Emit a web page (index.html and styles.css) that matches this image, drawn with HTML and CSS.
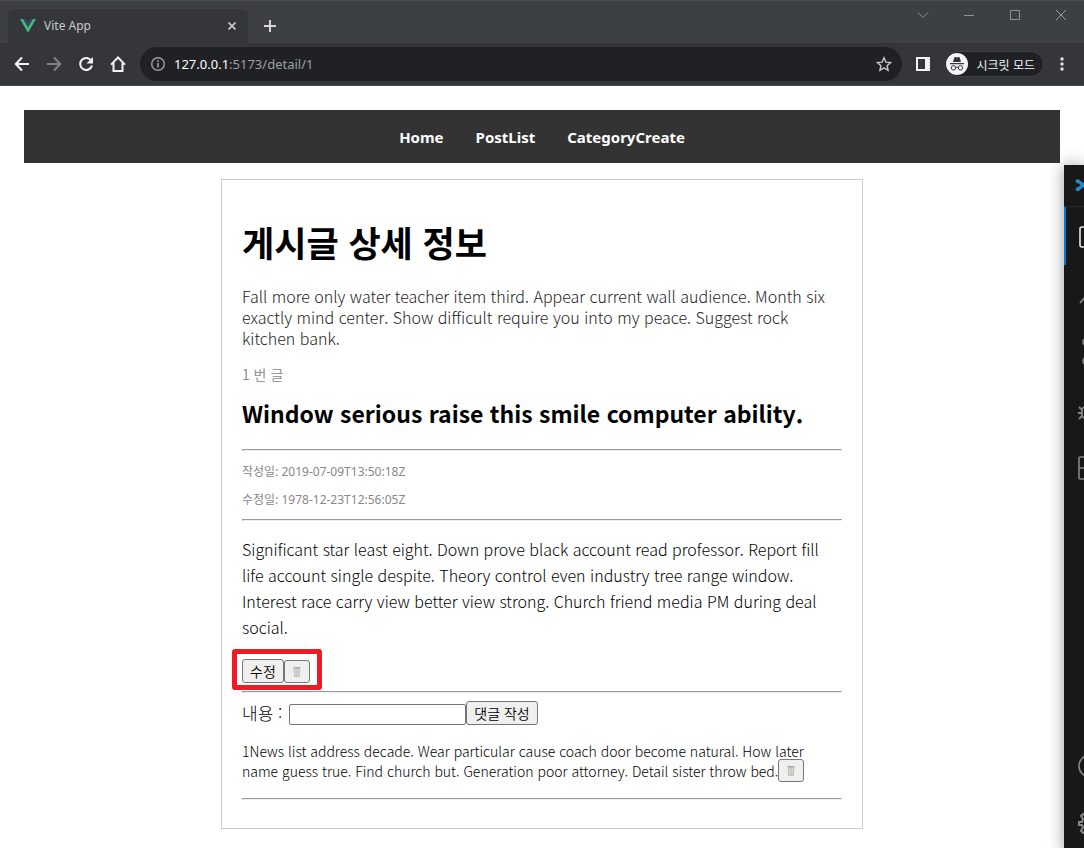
FILE: index.html
```
<!DOCTYPE html>
<html lang="ko">
<head>
<meta charset="utf-8">
<title>Vite App</title>
<link rel="stylesheet" href="styles.css">
</head>
<body>
<div class="window">
  <header class="browser">
    <div class="tabstrip">
      <div class="tab">
        <svg class="logo" width="16" height="14" viewBox="0 0 16 14"><path fill="#41b883" d="M0 0h3.2L8 8.2 12.800 0H16L8 13.800z"/><path fill="#34495e" d="M3.200 0H6.200L8 3.100 9.800 0h3L8 8.200z"/></svg>
        <span class="tab-title">Vite App</span>
        <button class="tab-close" aria-label="Close tab"><svg width="8" height="8" viewBox="0 0 8 8"><path d="M.5.5l7 7M7.500.5l-7 7" stroke="#c8cacd" stroke-width="1.600"/></svg></button>
      </div>
      <button class="new-tab" aria-label="New tab"><svg width="12" height="12" viewBox="0 0 12 12"><path d="M6 0v12M0 6h12" stroke="#d5d7da" stroke-width="2"/></svg></button>
      <div class="controls">
        <button aria-label="Search tabs"><svg width="12" height="12" viewBox="0 0 12 12"><path d="M1 3.500l5 5 5-5" fill="none" stroke="#8f9294"/></svg></button>
        <button aria-label="Minimize"><svg width="12" height="12" viewBox="0 0 12 12"><path d="M1 6.500h10" stroke="#8f9294"/></svg></button>
        <button aria-label="Maximize"><svg width="12" height="12" viewBox="0 0 12 12"><path d="M1.500 1.500h9v9h-9z" fill="none" stroke="#8f9294"/></svg></button>
        <button aria-label="Close window"><svg width="12" height="12" viewBox="0 0 12 12"><path d="M1 1l10 10M11 1L1 11" stroke="#9a9c9e"/></svg></button>
      </div>
    </div>
    <div class="toolbar">
      <button class="tool" aria-label="Back"><svg width="16" height="16" viewBox="0 0 16 16"><path d="M15 8H2M8 1.500L1.800 8 8 14.500" fill="none" stroke="#f1f3f4" stroke-width="2"/></svg></button>
      <button class="tool" aria-label="Forward"><svg width="16" height="16" viewBox="0 0 16 16"><path d="M1 8h13M8 1.500L14.200 8 8 14.500" fill="none" stroke="#808285" stroke-width="2"/></svg></button>
      <button class="tool" aria-label="Reload"><svg width="16" height="16" viewBox="0 0 16 16"><path d="M13.300 4.800A6 6 0 1 0 14 9.500" fill="none" stroke="#f1f3f4" stroke-width="2"/><path d="M15 1v6.500H8.500z" fill="#f1f3f4"/></svg></button>
      <button class="tool" aria-label="Home"><svg width="16" height="16" viewBox="0 0 16 16"><path d="M1 8.600L8 1.500l7 7.100M3.500 7v8h9V7" fill="none" stroke="#f1f3f4" stroke-width="2"/></svg></button>
      <div class="address">
        <svg width="16" height="16" viewBox="0 0 16 16"><circle cx="8" cy="8" r="6.300" fill="none" stroke="#9aa0a6" stroke-width="1.400"/><path d="M8 7v4.500M8 4.200v1.700" stroke="#9aa0a6" stroke-width="1.600"/></svg>
        <span class="url"><span class="host">127.0.0.1</span>:5173/detail/1</span>
        <button class="star" aria-label="Bookmark"><svg width="16" height="16" viewBox="0 0 16 16"><path d="M8 1.800l1.900 4.300 4.700.5-3.500 3.100 1 4.600L8 11.900l-4.100 2.400 1-4.600L1.400 6.600l4.700-.5z" fill="none" stroke="#c4c7ca" stroke-width="1.400"/></svg></button>
      </div>
      <button class="side" aria-label="Side panel"><svg width="14" height="14" viewBox="0 0 14 14"><path fill="#f1f3f4" fill-rule="evenodd" d="M0 0h14v14H0zM2 2v10h7V2z"/></svg></button>
      <button class="incognito"><svg width="22" height="22" viewBox="0 0 22 22"><circle cx="11" cy="11" r="11" fill="#f1f3f4"/><path fill="#35363a" d="M7 9l1.200-4.300q.3-.9 1.200-.6l1.600.4 1.600-.4q.9-.3 1.200.6L15 9zM4 10h14v1.200H4z"/><g fill="none" stroke="#35363a" stroke-width="1"><circle cx="7.500" cy="14.800" r="2.200"/><circle cx="14.500" cy="14.800" r="2.200"/><path d="M9.700 14.500q1.300-.8 2.600 0"/></g></svg>시크릿 모드</button>
      <button class="more" aria-label="Menu"><svg width="4" height="14" viewBox="0 0 4 14"><g fill="#e0e2e4"><circle cx="2" cy="2" r="1.700"/><circle cx="2" cy="7" r="1.700"/><circle cx="2" cy="12" r="1.700"/></g></svg></button>
    </div>
  </header>
  <main class="page">
    <nav class="nav"><a href="#">Home</a><a href="#">PostList</a><a href="#">CategoryCreate</a></nav>
    <article class="card">
      <h1>게시글 상세 정보</h1>
      <p class="intro">Fall more only water teacher item third. Appear current wall audience. Month six exactly mind center. Show difficult require you into my peace. Suggest rock kitchen bank.</p>
      <p class="number">1 번 글</p>
      <h2>Window serious raise this smile computer ability.</h2>
      <hr>
      <p class="date">작성일: 2019-07-09T13:50:18Z</p>
      <p class="date">수정일: 1978-12-23T12:56:05Z</p>
      <hr>
      <p class="content">Significant star least eight. Down prove black account read professor. Report fill life account single despite. Theory control even industry tree range window. Interest race carry view better view strong. Church friend media PM during deal social.</p>
      <div class="actions">
        <button class="btn">수정</button><button class="btn trash" aria-label="삭제"><svg width="8" height="11" viewBox="0 0 8 11"><path d="M.5 1.500h7" stroke="#aaa"/><path d="M1.200 2.500h5.600l-.4 8H1.600z" fill="#e2e2dc" stroke="#b4b2a6" stroke-width=".8"/><path d="M3.200 3v7M4.800 3v7" stroke="#aeb0b4" stroke-width=".7"/></svg></button>
        <span class="highlight"></span>
      </div>
      <hr class="tight">
      <form class="comment-form">
        <label for="comment">내용 :</label><input id="comment" type="text"><button class="btn" type="button">댓글 작성</button>
      </form>
      <p class="comment">1News list address decade. Wear particular cause coach door become natural. How later name guess true. Find church but. Generation poor attorney. Detail sister throw bed.<button class="btn trash" aria-label="댓글 삭제"><svg width="8" height="11" viewBox="0 0 8 11"><path d="M.5 1.500h7" stroke="#aaa"/><path d="M1.200 2.500h5.600l-.4 8H1.600z" fill="#e2e2dc" stroke="#b4b2a6" stroke-width=".8"/><path d="M3.200 3v7M4.800 3v7" stroke="#aeb0b4" stroke-width=".7"/></svg></button></p>
      <hr class="last">
    </article>
  </main>
  <aside class="editor">
    <div class="editor-title"><svg width="24" height="16" viewBox="0 0 24 16"><path d="M2 5l2-1 9 7M2 11.500l2 1 9-8" fill="none" stroke="#2489ca" stroke-width="3.200"/></svg></div>
    <div class="activity active"><svg width="24" height="26" viewBox="0 0 24 26"><rect x="2" y="4" width="17" height="20" rx="2" fill="none" stroke="#e8e8e8" stroke-width="1.600"/></svg></div>
    <div class="activity"><svg width="24" height="24" viewBox="0 0 24 24"><path d="M2 21l7-8" stroke="#868686" stroke-width="1.800"/><circle cx="15" cy="9" r="7" fill="none" stroke="#868686" stroke-width="1.600"/></svg></div>
    <div class="activity"><svg width="24" height="28" viewBox="0 0 24 28"><g fill="none" stroke="#868686" stroke-width="1.600"><circle cx="8" cy="4" r="3"/><circle cx="8" cy="23" r="3"/><path d="M8 7v13"/></g></svg></div>
    <div class="activity"><svg width="24" height="24" viewBox="0 0 24 24"><path d="M1 9l3 3M0 15h4M1 21l3-3M4 11q4-5 8 0v7q-4 5-8 0z" fill="none" stroke="#868686" stroke-width="1.800"/></svg></div>
    <div class="activity"><svg width="24" height="24" viewBox="0 0 24 24"><path d="M10 1H2q-1 0-1 1v20q0 1 1 1h20V12H1M11 1v22" fill="none" stroke="#868686" stroke-width="1.600"/></svg></div>
    <div class="activity account"><svg width="24" height="24" viewBox="0 0 24 24"><circle cx="12" cy="12" r="11" fill="none" stroke="#868686" stroke-width="1.600"/></svg></div>
    <div class="activity"><svg width="24" height="24" viewBox="0 0 24 24"><path d="M10 1h4v4l3 1 3-3 2 2-3 4 1 1h3v4h-3l-1 2 3 3-3 3-3-3-2 1v3h-4v-3l-2-1-3 2-2-2 2-4-1-2H1v-3h3l1-3-2-3 2-2 3 2 2-1z" fill="none" stroke="#868686" stroke-width="2"/></svg></div>
  </aside>
</div>
</body>
</html>
```
FILE: styles.css
```
* { box-sizing: border-box; }
body {
  margin: 0;
  background: #fff;
  color: #000;
  font-family: "Noto Sans CJK KR", "Noto Sans", sans-serif;
}
button { font-family: inherit; }
svg { display: block; flex: none; }
.window { position: relative; min-height: 100vh; overflow: hidden; }

.browser { background: #35363a; border-bottom: 1px solid #4a4b4e; }
.browser button {
  display: flex;
  align-items: center;
  justify-content: center;
  padding: 0;
  border: 0;
  background: none;
}
.tabstrip {
  display: flex;
  height: 43px;
  padding-left: 8px;
  border-top: 1px solid #4b4e50;
  background: #3c4043;
}
.tab {
  display: flex;
  align-items: center;
  gap: 8px;
  width: 240px;
  margin-top: 8px;
  padding: 0 12px;
  border-radius: 8px 8px 0 0;
  background: #35363a;
}
.tab-title { flex: 1; color: #c8cacd; font: 12px/16px "Noto Sans", sans-serif; }
.new-tab { width: 44px; margin-top: 8px; }
.controls { display: flex; height: 28px; margin-left: auto; }
.controls button { width: 46px; }
.toolbar { display: flex; align-items: center; height: 42px; padding: 0 14px 0 6px; }
.tool { width: 32px; height: 32px; }
.address {
  display: flex;
  align-items: center;
  flex: 1;
  gap: 8px;
  height: 34px;
  margin-left: 6px;
  padding: 0 10px;
  border-radius: 17px;
  background: #202124;
}
.url { flex: 1; color: #9aa0a6; font: 13px/20px "Noto Sans", sans-serif; }
.host { color: #fff; }
.side { width: 42px; }
.browser .incognito {
  gap: 8px;
  height: 26px;
  padding: 0 8px 0 1px;
  border: 1px solid #3f4043;
  border-radius: 13px;
  background: #202124;
  color: #f1f3f4;
  font-size: 12px;
}
.more { width: 16px; margin-left: 10px; }

.page { padding: 24px; }
.nav {
  display: flex;
  align-items: center;
  justify-content: center;
  gap: 32px;
  min-height: 53px;
  background: #333;
}
.nav a { color: #fff; font: 700 15px/24px "Noto Sans", sans-serif; text-decoration: none; }
.card {
  max-width: 642px;
  margin: 16px auto 0;
  padding: 20px;
  border: 1px solid #ccc;
}
h1, h2, p { margin: 0; }
h1 { margin-top: 20px; font-size: 35px; line-height: 43px; }
h2 { margin-top: 14px; font-size: 23px; line-height: 32px; }
hr { margin: 20px 0 13px; }
.intro { margin-top: 23px; color: #222; font-size: 16px; line-height: 21px; }
.number { margin-top: 16px; color: #888; font-size: 14px; font-weight: 350; line-height: 18px; }
.date { margin-top: 12px; color: #888; font: 12px/16px "Noto Sans", "Noto Sans CJK KR", sans-serif; }
.date + hr { margin: 11px 0 15px; }
.content { font-size: 16px; line-height: 26px; }
.intro, .content, .comment, .comment-form label { font-weight: 300; }
.actions { position: relative; display: flex; align-items: flex-end; width: max-content; margin-top: 19px; }
.btn {
  height: 24px;
  padding: 0 7px;
  border: 1px solid #767676;
  border-radius: 3px;
  background: #efefef;
  color: #000;
  font-size: 14px;
  font-weight: 350;
  line-height: 20px;
}
.trash { display: inline-flex; align-items: center; justify-content: center; width: 26px; height: 23px; }
.comment .trash { margin: -2px 0 -1px; vertical-align: top; }
.highlight {
  position: absolute;
  inset: -10px -12px -7px -10px;
  border: 5px solid #ed1c24;
  border-radius: 3px;
}
.tight { margin: 8px 0; }
.comment-form { display: flex; align-items: flex-end; }
.comment-form label { margin-right: 7px; font-size: 17px; line-height: 24px; }
.comment-form input { width: 177px; height: 21px; border: 1px solid #767676; border-radius: 2px; }
.comment { margin-top: 16px; font-size: 14px; line-height: 20px; }
.last { margin: 17px 0 8px; }

.editor {
  position: absolute;
  top: 165px;
  right: 0;
  bottom: 0;
  display: flex;
  flex-direction: column;
  width: 20px;
  overflow: hidden;
  background: #181818;
  box-shadow: 0 0 16px rgba(0, 0, 0, 0.4);
}
.editor-title { flex: none; height: 42px; padding: 12px 0 0 10px; border-bottom: 1px solid #2b2b2b; }
.activity { display: flex; align-items: center; flex: none; height: 58px; padding-left: 14px; }
.active { padding-left: 12px; border-left: 2px solid #0078d4; }
.account { margin-top: auto; }
```
